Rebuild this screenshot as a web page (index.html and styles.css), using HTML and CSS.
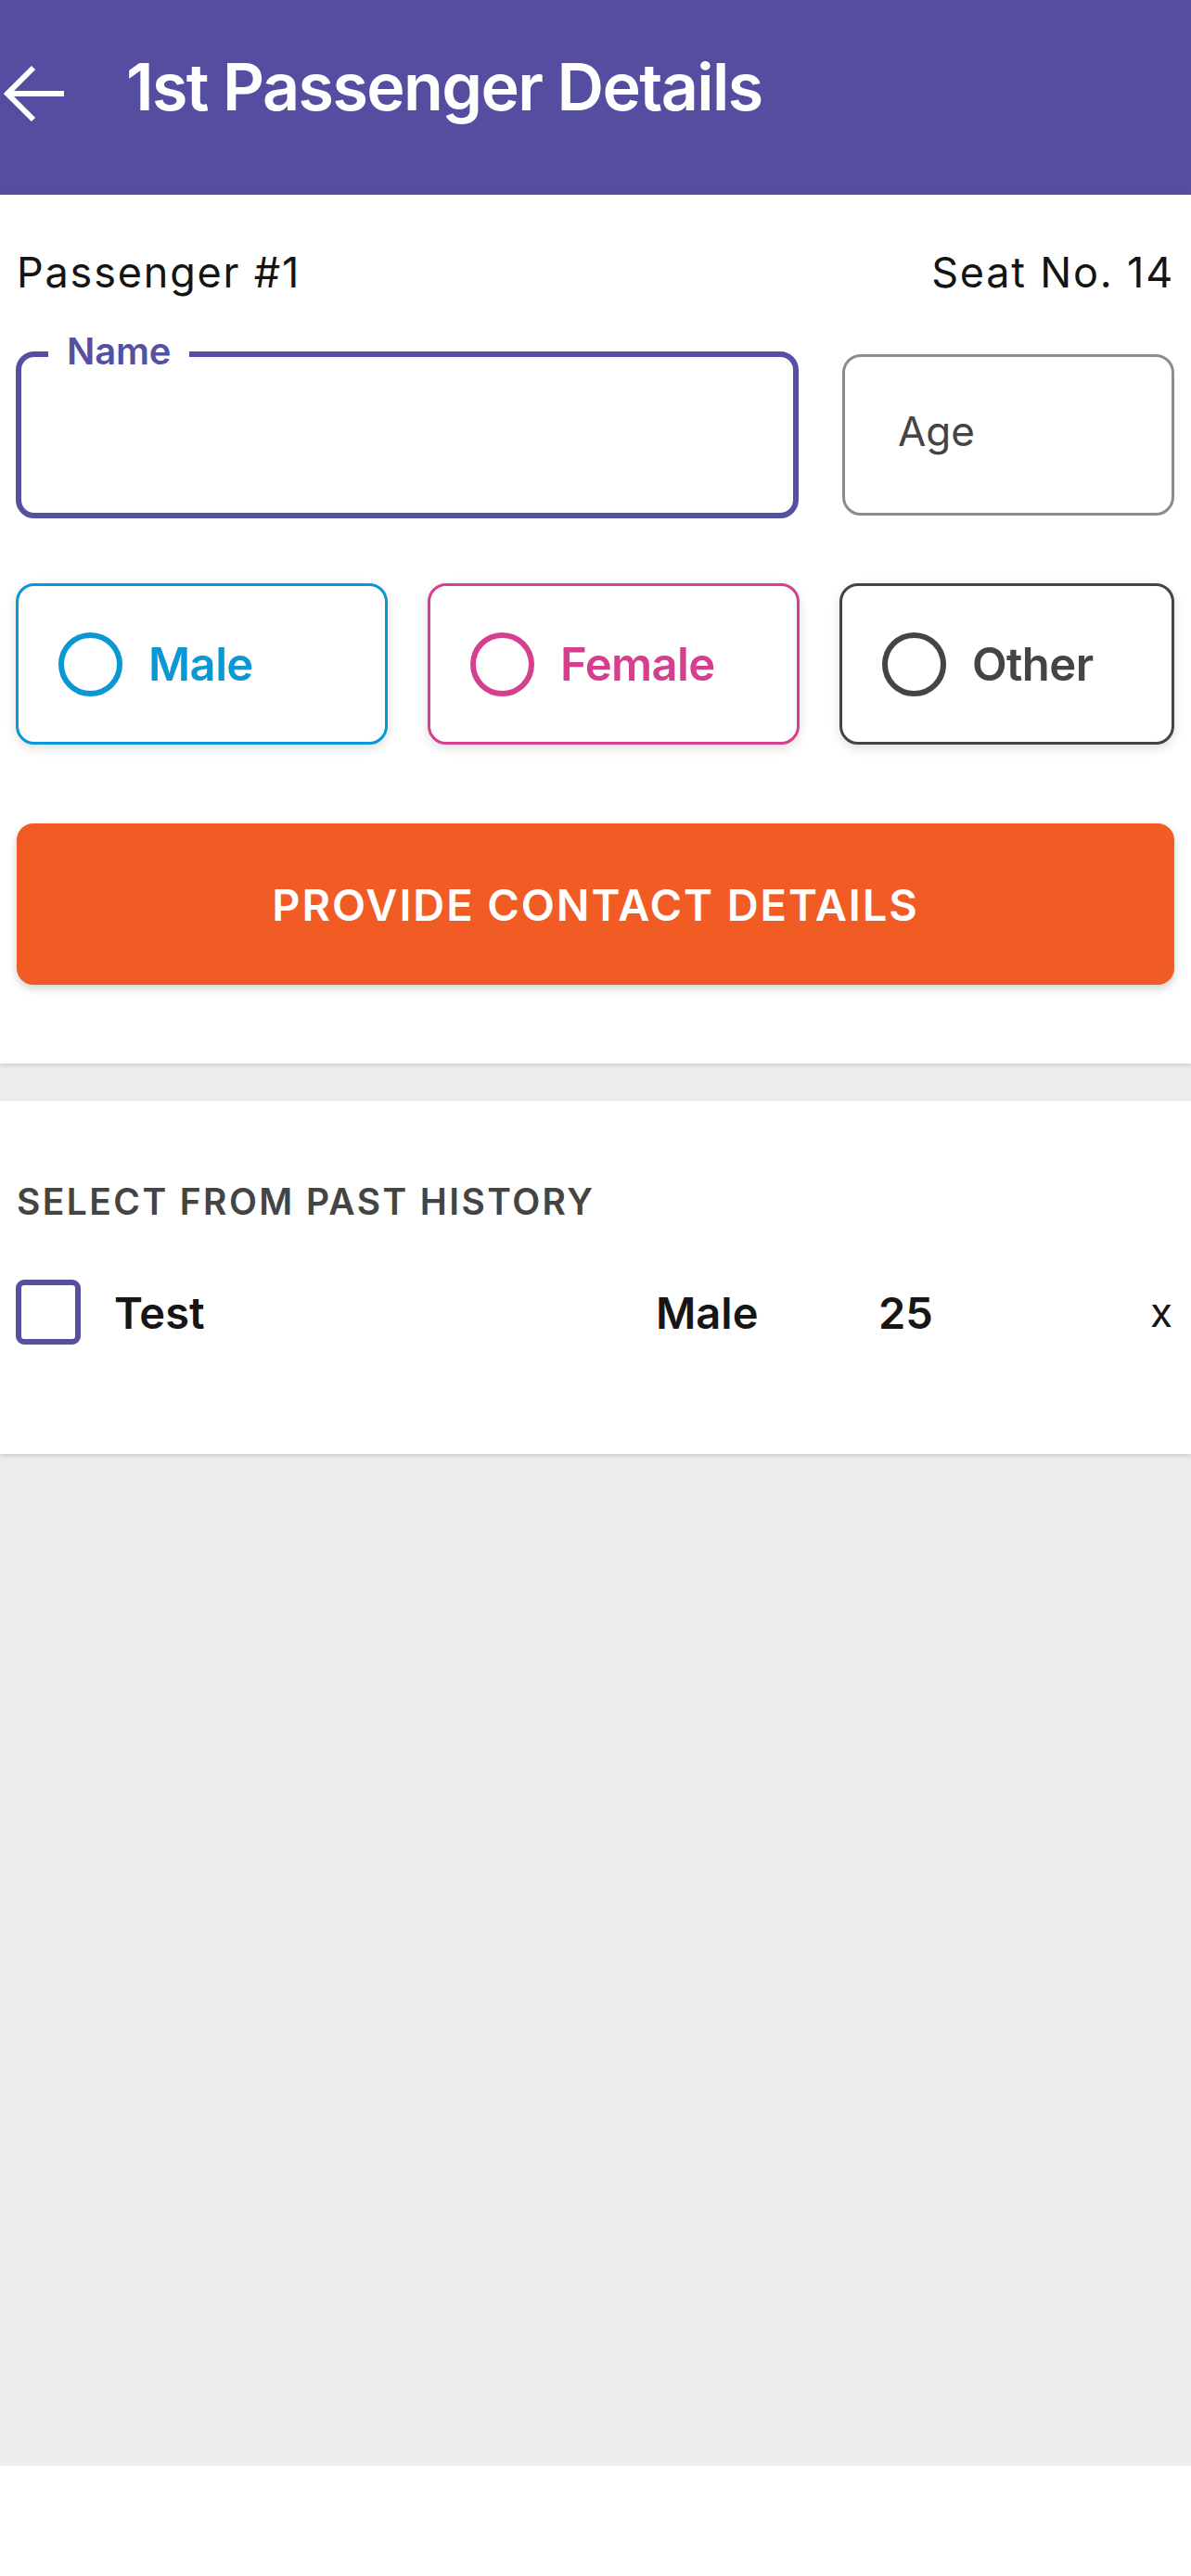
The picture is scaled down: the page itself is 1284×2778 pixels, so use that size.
FILE: index.html
```html
<!DOCTYPE html>
<html lang="en">
<head>
<meta charset="utf-8">
<title>1st Passenger Details</title>
<link rel="stylesheet" href="styles.css">
</head>
<body>
<div class="screen">
  <header class="appbar">
    <button class="back" aria-label="Back">
      <svg width="72" height="64" viewBox="0 0 72 64" fill="none" stroke="#fff" stroke-width="6">
        <path d="M69 32 H8"/>
        <path d="M36 4 L8 32 L36 60" stroke-linejoin="miter"/>
      </svg>
    </button>
    <h1 class="title">1st Passenger Details</h1>
  </header>

  <section class="card passenger">
    <div class="pass-head">
      <span>Passenger #1</span>
      <span>Seat No. 14</span>
    </div>
    <div class="fields">
      <div class="field name">
        <span class="float-label">Name</span>
      </div>
      <div class="field age">
        <span class="placeholder">Age</span>
      </div>
    </div>
    <div class="genders">
      <div class="gender male"><span class="radio"></span><span class="glabel">Male</span></div>
      <div class="gender female"><span class="radio"></span><span class="glabel">Female</span></div>
      <div class="gender other"><span class="radio"></span><span class="glabel">Other</span></div>
    </div>
    <button class="cta">PROVIDE CONTACT DETAILS</button>
  </section>

  <section class="card history">
    <h2 class="history-title">SELECT FROM PAST HISTORY</h2>
    <div class="history-row">
      <span class="checkbox"></span>
      <span class="h-name">Test</span>
      <span class="h-gender">Male</span>
      <span class="h-age">25</span>
      <span class="h-remove">x</span>
    </div>
  </section>

  <div class="filler"></div>
  <div class="bottom-safe"></div>
</div>
</body>
</html>
```

FILE: styles.css
```css
* { box-sizing: border-box; }

html, body {
  margin: 0;
  padding: 0;
}

body {
  font-family: "Inter", "Roboto", "Liberation Sans", sans-serif;
  background: #ededed;
  color: #161616;
}

.screen {
  display: flex;
  flex-direction: column;
  height: 2778px;
}

/* App bar */
.appbar {
  height: 210px;
  background: #554ea0;
  display: flex;
  align-items: flex-start;
  padding-top: 64px;
  flex-shrink: 0;
}

.back {
  background: none;
  border: 0;
  padding: 0;
  margin: 5px 0 0 0;
  width: 72px;
  height: 64px;
  display: block;
}

.back svg { display: block; }

.title {
  margin: -2px 0 0 64px;
  color: #fff;
  font-size: 70px;
  font-weight: 600;
  line-height: 64px;
  letter-spacing: -1.6px;
}

/* Cards */
.card {
  background: #fff;
  box-shadow: 0 2px 5px rgba(0, 0, 0, 0.14);
  flex-shrink: 0;
  padding: 0 18px;
}

.passenger {
  padding-top: 56px;
  padding-bottom: 85px;
  margin-bottom: 40px;
}

.pass-head {
  display: flex;
  justify-content: space-between;
  font-size: 45px;
  line-height: 56px;
  height: 56px;
  color: #141414;
  letter-spacing: 1.8px;
}

.fields {
  display: grid;
  grid-template-columns: 844px 1fr;
  column-gap: 47px;
  align-items: center;
  height: 180px;
  margin-top: 57px;
  margin-left: -1px;
}

.field {
  position: relative;
  border-radius: 20px;
  background: #fff;
}

.field.name {
  height: 180px;
  border: 6px solid #5650a3;
}

.float-label {
  position: absolute;
  top: -30px;
  left: 29px;
  padding: 0 20px;
  background: #fff;
  color: #5650a3;
  font-size: 40px;
  font-weight: 600;
  line-height: 48px;
  letter-spacing: -0.2px;
}

.field.age {
  height: 174px;
  border: 3px solid #8c8c8c;
  display: flex;
  align-items: center;
  padding-left: 57px;
}

.placeholder {
  font-size: 44px;
  color: #444;
  letter-spacing: 0;
  margin-top: -8px;
}

/* Gender */
.genders {
  display: grid;
  grid-template-columns: 401px 401px 1fr;
  column-gap: 43px;
  margin-top: 70px;
  margin-left: -1px;
}

.gender {
  height: 174px;
  border: 3px solid;
  border-radius: 20px;
  display: flex;
  align-items: center;
  padding-left: 43px;
  box-shadow: 0 4px 12px rgba(0, 0, 0, 0.13);
  background: #fff;
}

.radio {
  width: 69px;
  height: 69px;
  border: 6.5px solid currentColor;
  border-radius: 50%;
  flex-shrink: 0;
}

.glabel {
  margin-left: 28px;
  font-size: 49px;
  font-weight: 600;
  letter-spacing: -0.6px;
}

.male { border-color: #0a97d5; color: #0a97d5; }
.female { border-color: #d63f8e; color: #d63f8e; }
.other { border-color: #444; color: #444; }

/* CTA */
.cta {
  display: block;
  width: 100%;
  height: 174px;
  margin-top: 85px;
  border: 0;
  border-radius: 18px;
  background: #f15b24;
  color: #fff;
  font-family: inherit;
  font-size: 47px;
  font-weight: 600;
  letter-spacing: 1.9px;
  box-shadow: 0 4px 10px rgba(0, 0, 0, 0.18);
}

/* History */
.history {
  padding-top: 85px;
  padding-bottom: 118px;
}

.history-title {
  margin: 0;
  font-size: 39px;
  line-height: 48px;
  font-weight: 600;
  color: #444;
  letter-spacing: 2.4px;
}

.history-row {
  margin-top: 60px;
  height: 70px;
  display: grid;
  grid-template-columns: 106px 584px 240px 1fr auto;
  align-items: center;
  font-size: 47px;
  font-weight: 600;
  color: #161616;
  letter-spacing: 0;
  margin-left: -1px;
}

.checkbox {
  width: 70px;
  height: 70px;
  border: 6px solid #5650a3;
  border-radius: 9px;
}

.h-remove {
  font-weight: 400;
  font-size: 44px;
  padding-right: 2px;
}

.filler {
  flex: 1;
}

.bottom-safe {
  height: 119px;
  background: #fff;
  flex-shrink: 0;
}
```
